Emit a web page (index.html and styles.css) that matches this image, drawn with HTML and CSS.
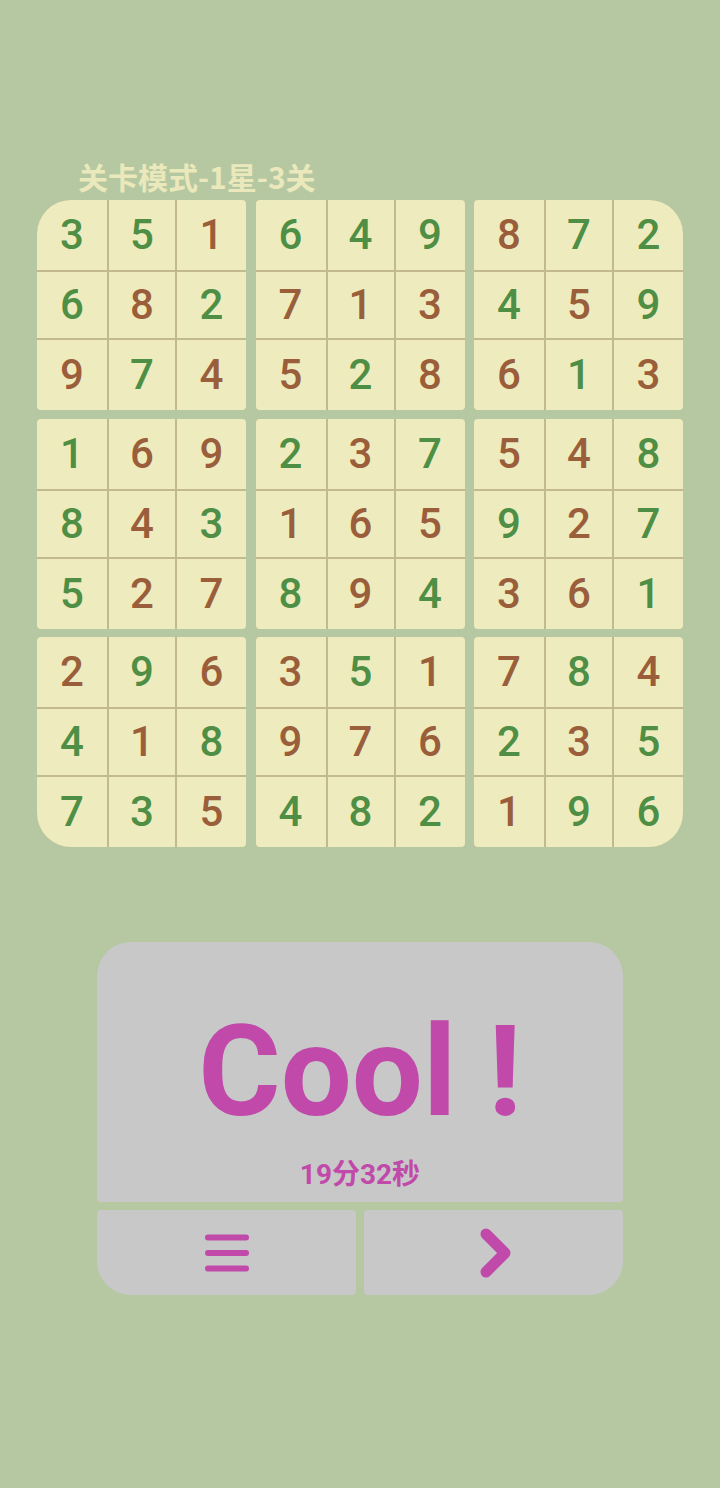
FILE: index.html
```html
<!DOCTYPE html>
<html lang="zh">
<head>
<meta charset="utf-8">
<title>数独</title>
<link rel="stylesheet" href="styles.css">
</head>
<body>
<main class="page">
  <section class="board-wrap">
    <h1 class="level-title">关卡模式-1星-3关</h1>
    <div class="board">
      <div class="box">
        <div class="c g">3</div><div class="c g">5</div><div class="c b">1</div>
        <div class="c g">6</div><div class="c b">8</div><div class="c g">2</div>
        <div class="c b">9</div><div class="c g">7</div><div class="c b">4</div>
      </div>
      <div class="box">
        <div class="c g">6</div><div class="c g">4</div><div class="c g">9</div>
        <div class="c b">7</div><div class="c b">1</div><div class="c b">3</div>
        <div class="c b">5</div><div class="c g">2</div><div class="c b">8</div>
      </div>
      <div class="box">
        <div class="c b">8</div><div class="c g">7</div><div class="c g">2</div>
        <div class="c g">4</div><div class="c b">5</div><div class="c g">9</div>
        <div class="c b">6</div><div class="c g">1</div><div class="c b">3</div>
      </div>
      <div class="box">
        <div class="c g">1</div><div class="c b">6</div><div class="c b">9</div>
        <div class="c g">8</div><div class="c b">4</div><div class="c g">3</div>
        <div class="c g">5</div><div class="c b">2</div><div class="c b">7</div>
      </div>
      <div class="box">
        <div class="c g">2</div><div class="c b">3</div><div class="c g">7</div>
        <div class="c b">1</div><div class="c b">6</div><div class="c b">5</div>
        <div class="c g">8</div><div class="c b">9</div><div class="c g">4</div>
      </div>
      <div class="box">
        <div class="c b">5</div><div class="c b">4</div><div class="c g">8</div>
        <div class="c g">9</div><div class="c b">2</div><div class="c g">7</div>
        <div class="c b">3</div><div class="c b">6</div><div class="c g">1</div>
      </div>
      <div class="box">
        <div class="c b">2</div><div class="c g">9</div><div class="c b">6</div>
        <div class="c g">4</div><div class="c b">1</div><div class="c g">8</div>
        <div class="c g">7</div><div class="c g">3</div><div class="c b">5</div>
      </div>
      <div class="box">
        <div class="c b">3</div><div class="c g">5</div><div class="c b">1</div>
        <div class="c b">9</div><div class="c b">7</div><div class="c b">6</div>
        <div class="c g">4</div><div class="c g">8</div><div class="c g">2</div>
      </div>
      <div class="box">
        <div class="c b">7</div><div class="c g">8</div><div class="c b">4</div>
        <div class="c g">2</div><div class="c b">3</div><div class="c g">5</div>
        <div class="c b">1</div><div class="c g">9</div><div class="c g">6</div>
      </div>
    </div>
  </section>

  <section class="result">
    <div class="result-main">
      <div class="cool">Cool !</div>
      <div class="time">19分32秒</div>
    </div>
    <button class="btn btn-menu" type="button" aria-label="菜单">
      <svg width="44" height="38" viewBox="0 0 44 38">
        <g stroke="#c049a9" stroke-width="6" stroke-linecap="round">
          <line x1="3" y1="3.5" x2="41" y2="3.5"/>
          <line x1="3" y1="19" x2="41" y2="19"/>
          <line x1="3" y1="34.5" x2="41" y2="34.5"/>
        </g>
      </svg>
    </button>
    <button class="btn btn-next" type="button" aria-label="下一关">
      <svg width="32" height="50" viewBox="0 0 32 50">
        <polyline points="6,6 25,25 6,44" fill="none" stroke="#c049a9" stroke-width="11" stroke-linecap="round" stroke-linejoin="round"/>
      </svg>
    </button>
  </section>
</main>
</body>
</html>
```

FILE: styles.css
```css
html, body {
  margin: 0;
  padding: 0;
}

body {
  background: #b5c8a2;
  width: 720px;
  height: 1488px;
  overflow: hidden;
  font-family: Roboto, "Noto Sans CJK SC", sans-serif;
}

.page {
  display: flex;
  flex-direction: column;
  padding-top: 161px;
}

.board-wrap {
  display: flex;
  flex-direction: column;
  margin-left: 37px;
}

.level-title {
  margin: 0 0 9px 41px;
  font-family: "Noto Sans CJK SC", sans-serif;
  font-weight: 700;
  font-size: 30px;
  line-height: 30px;
  color: #ebe9bb;
}

.board {
  display: grid;
  grid-template-columns: repeat(3, 209px);
  grid-template-rows: repeat(3, 210px);
  column-gap: 9.5px;
  row-gap: 8.5px;
  width: 646px;
}

.box {
  display: grid;
  grid-template-columns: 70px 66px 69px;
  grid-template-rows: 70px 66px 70px;
  gap: 2px;
  background: #c3b98f;
  border-radius: 4px;
  overflow: hidden;
}

.box:nth-child(1) { border-top-left-radius: 34px; }
.box:nth-child(3) { border-top-right-radius: 34px; }
.box:nth-child(7) { border-bottom-left-radius: 34px; }
.box:nth-child(9) { border-bottom-right-radius: 34px; }

.c {
  display: flex;
  align-items: center;
  justify-content: center;
  background: #eeecbe;
  font-family: Roboto, sans-serif;
  font-weight: 500;
  font-size: 42px;
  line-height: 1;
}

.g { color: #4f8e45; }
.b { color: #9a5e3a; }

.result {
  display: grid;
  grid-template-columns: 1fr 1fr;
  grid-template-rows: 260px 85px;
  gap: 8px;
  width: 526px;
  margin: 95px auto 0;
}

.result-main {
  grid-column: 1 / 3;
  background: #c8c8c8;
  border-radius: 34px 34px 4px 4px;
  display: flex;
  flex-direction: column;
  align-items: center;
  padding-top: 67px;
  box-sizing: border-box;
  color: #c049a9;
}

.cool {
  font-family: Roboto, sans-serif;
  font-weight: 700;
  font-size: 126px;
  line-height: 126px;
}

.time {
  margin-top: 26px;
  font-family: Roboto, "Noto Sans CJK SC", sans-serif;
  font-weight: 700;
  font-size: 28px;
  line-height: 28px;
}

.btn {
  border: none;
  margin: 0;
  padding: 0;
  background: #c8c8c8;
  display: flex;
  align-items: center;
  justify-content: center;
}

.btn-menu { border-radius: 4px 4px 4px 34px; }
.btn-next { border-radius: 4px 4px 34px 4px; }
.btn-next svg { margin-left: 5px; }
```
